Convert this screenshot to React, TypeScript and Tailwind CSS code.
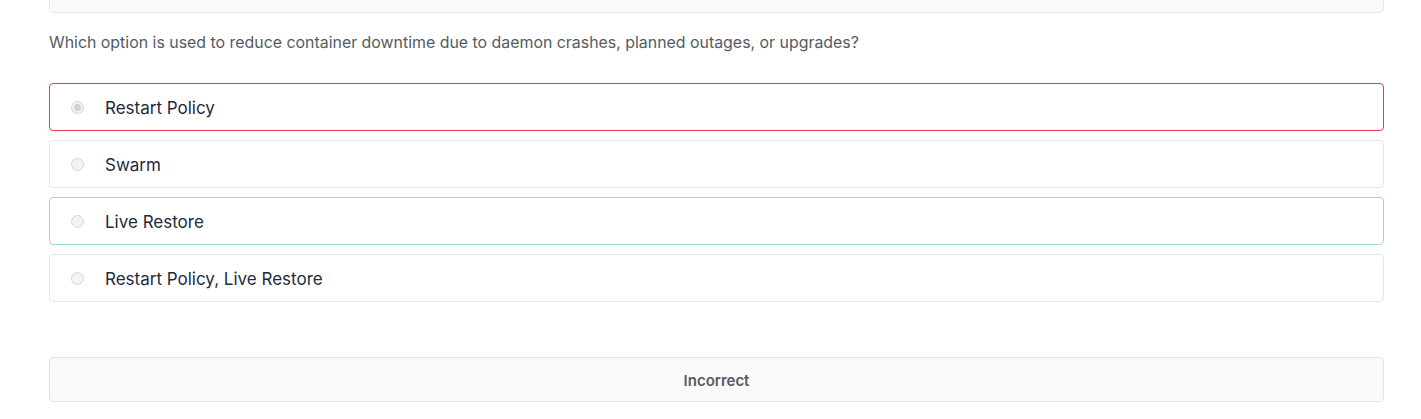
import React from "react";

const options = [
  { label: "Restart Policy", checked: true, border: "border-[#e53e4a]" },
  { label: "Swarm", checked: false, border: "border-[#e6e6e6]" },
  { label: "Live Restore", checked: false, border: "border-[#98dcc4]" },
  { label: "Restart Policy, Live Restore", checked: false, border: "border-[#e6e6e6]" },
];

function Radio({ checked }: { checked: boolean }) {
  return (
    <span className="flex h-[13px] w-[13px] items-center justify-center rounded-full border border-[#d6d6d6] bg-[#f3f3f3]">
      {checked && <span className="h-[7px] w-[7px] rounded-full bg-[#d2d2d2]" />}
    </span>
  );
}

export default function App() {
  return (
    <div
      className="min-h-[419px] overflow-hidden bg-white pl-[49px] pr-[37px]"
      style={{ fontFamily: "Inter, 'Noto Sans', sans-serif" }}
    >
      <div className="-mt-[40px] h-[53px] rounded-b-[5px] border border-[#e6e6e6] bg-[#fafafa]" />
      <p className="mt-[20px] text-[15.9px] leading-[20px] text-[#555b63]">
        Which option is used to reduce container downtime due to daemon crashes, planned outages, or upgrades?
      </p>
      <div className="mt-[30px] flex flex-col gap-[9px]">
        {options.map((o) => (
          <div
            key={o.label}
            className={`flex h-[48px] items-center rounded-[4px] border bg-white ${o.border}`}
          >
            <span className="ml-[21px] flex w-[13px] items-center pt-[1px]">
              <Radio checked={o.checked} />
            </span>
            <span className="ml-[21px] pt-[3px] text-[17px] text-[#1f2a3c]">{o.label}</span>
          </div>
        ))}
      </div>
      <div className="mt-[55px] flex h-[45px] items-center justify-center rounded-[4px] border border-[#e3e3e3] bg-[#fafafa] pt-[4px]">
        <span className="text-[15px] font-semibold text-[#555b63]">Incorrect</span>
      </div>
    </div>
  );
}
